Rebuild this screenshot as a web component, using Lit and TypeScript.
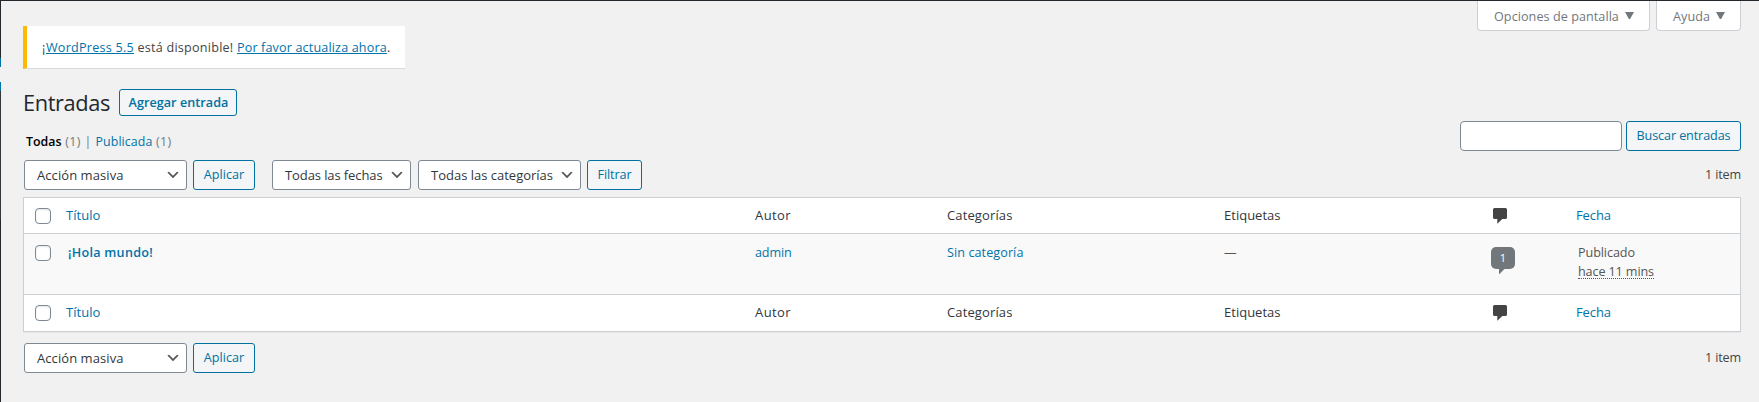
import { LitElement, html, css } from "lit";
import { customElement } from "lit/decorators.js";

const FAMILY = '"Open Sans", "Noto Sans", sans-serif';
const ctx = document.createElement("canvas").getContext("2d")!;

/** Text set to an exact advance width by spreading the difference over its letters. */
function fit(text: string, width: number, size = 12.6, weight = 400) {
  ctx.font = `${weight} ${size * 10}px ${FAMILY}`;
  const natural = ctx.measureText(text).width / 10;
  const spacing = (width - natural) / text.length;
  return html`<span class="fit" style="font-size:${size}px;font-weight:${weight};letter-spacing:${spacing.toFixed(3)}px">${text}</span>`;
}

const chevron = html`<svg class="chevron" width="16" height="16" viewBox="0 0 20 20"><path d="M5 6l5 5 5-5 2 1-7 7-7-7 2-1z" fill="#555"/></svg>`;
const arrow = html`<svg class="arrow" width="9" height="7" viewBox="0 0 9 7"><path d="M0 0h9L5.100 7H3.900z" fill="#72777c"/></svg>`;
const commentIcon = html`<svg class="comment" width="14" height="16" viewBox="0 0 14 16"><path d="M1.5 0h11Q14 0 14 1.5v8q0 1.500-1.500 1.500H9.300L4.300 15.800V11H1.500Q0 11 0 9.500v-8Q0 0 1.500 0z" fill="#444"/></svg>`;

@customElement("app-root")
export class AppRoot extends LitElement {
  static styles = css`
    :host {
      display: flex;
      box-sizing: border-box;
      height: 402px;
      overflow: hidden;
      border-top: 1px solid #23282d;
      background: #f1f1f1;
      color: #32373c;
      font-family: "Open Sans", "Noto Sans", sans-serif;
      font-size: 12.6px;
      line-height: 20px;
    }
    * { box-sizing: border-box; }
    .fit { white-space: pre; }
    a { color: #0073aa; text-decoration: none; }
    .edge { display: flex; flex-direction: column; width: 1px; flex: none; }
    .edge i { display: block; flex: none; }
    .e1 { height: 57px; background: #23282d; }
    .e2 { height: 9px; background: #0073aa; }
    .e3 { height: 15px; background: #f1f1f1; }
    .e4 { height: 9px; background: #0073aa; }
    .e5 { height: 129px; background: #32373c; }
    .e6 { height: 182px; background: #23282d; }
    main { flex: 1; min-width: 0; padding: 0 18px 0 22px; }

    .top { display: flex; align-items: flex-start; height: 68px; }
    .notice {
      display: flex; align-items: center;
      width: 382px; height: 43px; margin-top: 25px; padding: 2px 0 0 15px;
      background: #fff; border-left: 4px solid #ffb900;
      border-bottom: 1px solid #d9dadb; color: #444;
    }
    .notice a { text-decoration: underline; text-decoration-thickness: 1px; text-underline-offset: 1px; }
    .tabs { display: flex; gap: 6px; margin-left: auto; }
    .tab {
      display: flex; align-items: center; gap: 6px; height: 30px;
      padding: 2px 16px 0 16px; background: #fff; color: #72777c;
      border: 1px solid #ccd0d4; border-top: 0; border-radius: 0 0 4px 4px;
    }
    .tab.options { width: 173px; }
    .tab.help { width: 85px; }
    .arrow { display: block; flex: none; margin-bottom: 2px; }

    .title { display: flex; align-items: center; height: 27px; margin-top: 20px; color: #23282d; }
    .btn {
      display: flex; align-items: center; justify-content: center;
      height: 30px; background: #f3f5f6; color: #0071a1;
      border: 1px solid #0071a1; border-radius: 3px;
    }
    .title .btn { width: 118px; height: 27px; margin-left: 9px; padding: 1px 0 0 1px; }

    .filters { display: flex; height: 30px; margin-top: 5px; }
    .views { display: flex; padding: 11px 0 0 3px; color: #72777c; height: 32px; }
    .current { color: #000; }
    .search { display: flex; gap: 4px; margin-left: auto; }
    .input { width: 162px; height: 30px; background: #fff; border: 1px solid #7e8993; border-radius: 4px; }
    .search .btn { width: 115px; }

    .nav { display: flex; align-items: center; height: 30px; margin-top: 9px; padding-left: 1px; }
    .select {
      display: flex; align-items: center; justify-content: space-between;
      height: 30px; padding: 0 5px 0 12px; background: #fff; color: #32373c;
      border: 1px solid #7e8993; border-radius: 3px;
    }
    .chevron { display: block; flex: none; }
    .bulk { width: 163px; }
    .dates { width: 139px; margin-left: 17px; }
    .cats { width: 163px; margin-left: 7px; }
    .apply { width: 62px; margin-left: 6px; }
    .filter { width: 55px; margin-left: 6px; }
    .count { margin-left: auto; color: #444; }
    .nav.bottom { margin-top: 11px; }

    .table { margin-top: 7px; height: 135px; background: #fff; border: 1px solid #ccd0d4; box-shadow: 0 1px 1px rgba(0,0,0,.04); }
    .row { display: grid; grid-template-columns: 42px 689px 192px 277px 267px 85px 1fr; align-items: center; height: 35px; }
    .head { height: 36px; border-bottom: 1px solid #ccd0d4; }
    .body { height: 61px; align-items: start; padding-top: 9px; background: #f9f9f9; border-bottom: 1px solid #ccd0d4; color: #555; }
    .check {
      width: 16px; height: 16px; margin-left: 11px; background: #fff;
      border: 1px solid #7e8993; border-radius: 4px;
      box-shadow: inset 0 1px 2px rgba(0,0,0,.1);
    }
    .body .check { margin-top: 2px; }
    .comment { display: block; margin-left: 2px; }
    .post { padding-left: 2px; }
    .date { padding-left: 2px; line-height: 19px; }
    .date > div { height: 19px; }
    .ago { display: inline-block; height: 17px; border-bottom: 1px dotted #555; }
    .bubble { width: 24px; margin-top: 4px; }
    .num { height: 22px; border-radius: 5px; background: #72777c; color: #fff; font-size: 11px; line-height: 22px; text-align: center; }
    .tail { display: block; margin-left: 8px; }
  `;

  private header(cls: string) {
    return html`<div class="row ${cls}">
      <div class="check"></div>
      <a>${fit("Título", 34.5, 13)}</a>
      <div>${fit("Autor", 36, 13)}</div>
      <div>${fit("Categorías", 65.5, 13)}</div>
      <div>${fit("Etiquetas", 56.5, 13)}</div>
      <div>${commentIcon}</div>
      <a>${fit("Fecha", 35, 13)}</a>
    </div>`;
  }

  render() {
    return html`
      <div class="edge"><i class="e1"></i><i class="e2"></i><i class="e3"></i><i class="e4"></i><i class="e5"></i><i class="e6"></i></div>
      <main>
        <div class="top">
          <div class="notice">${fit("¡", 4)}<a>${fit("WordPress 5.5", 88)}</a>${fit(" está disponible! ", 103)}<a>${fit("Por favor actualiza ahora", 150)}</a>${fit(".", 3.5)}</div>
          <div class="tabs">
            <div class="tab options">${fit("Opciones de pantalla", 125)}${arrow}</div>
            <div class="tab help">${fit("Ayuda", 37)}${arrow}</div>
          </div>
        </div>
        <div class="title">${fit("Entradas", 87, 21.8)}<div class="btn">${fit("Agregar entrada", 100, 12.6, 600)}</div></div>
        <div class="filters">
          <div class="views"><span class="current">${fit("Todas", 35.5, 12.4, 600)}</span>${fit(" (1) ", 23, 12.4)}${fit("| ", 11, 12.4)}<a>${fit("Publicada", 57, 12.4)}</a>${fit(" (1)", 19, 12.4)}</div>
          <div class="search"><div class="input"></div><div class="btn">${fit("Buscar entradas", 94)}</div></div>
        </div>
        <div class="nav">
          <div class="select bulk">${fit("Acción masiva", 86.5, 13)}${chevron}</div>
          <div class="btn apply">${fit("Aplicar", 40.5)}</div>
          <div class="select dates">${fit("Todas las fechas", 97.5, 13)}${chevron}</div>
          <div class="select cats">${fit("Todas las categorías", 122, 13)}${chevron}</div>
          <div class="btn filter">${fit("Filtrar", 34)}</div>
          <div class="count">${fit("1 item", 36)}</div>
        </div>
        <div class="table">
          ${this.header("head")}
          <div class="row body">
            <div class="check"></div>
            <a class="post">${fit("¡Hola mundo!", 85, 12.6, 600)}</a>
            <a>${fit("admin", 36.5)}</a>
            <a>${fit("Sin categoría", 76.5)}</a>
            <div>${fit("—", 13)}</div>
            <div class="bubble"><div class="num">1</div><svg class="tail" width="6" height="5" viewBox="0 0 6 5"><path d="M0 0h5.500L.5 5H0z" fill="#72777c"/></svg></div>
            <div class="date"><div>${fit("Publicado", 57)}</div><div><span class="ago">${fit("hace 11 mins", 76)}</span></div></div>
          </div>
          ${this.header("foot")}
        </div>
        <div class="nav bottom">
          <div class="select bulk">${fit("Acción masiva", 86.5, 13)}${chevron}</div>
          <div class="btn apply">${fit("Aplicar", 40.5)}</div>
          <div class="count">${fit("1 item", 36)}</div>
        </div>
      </main>`;
  }
}
